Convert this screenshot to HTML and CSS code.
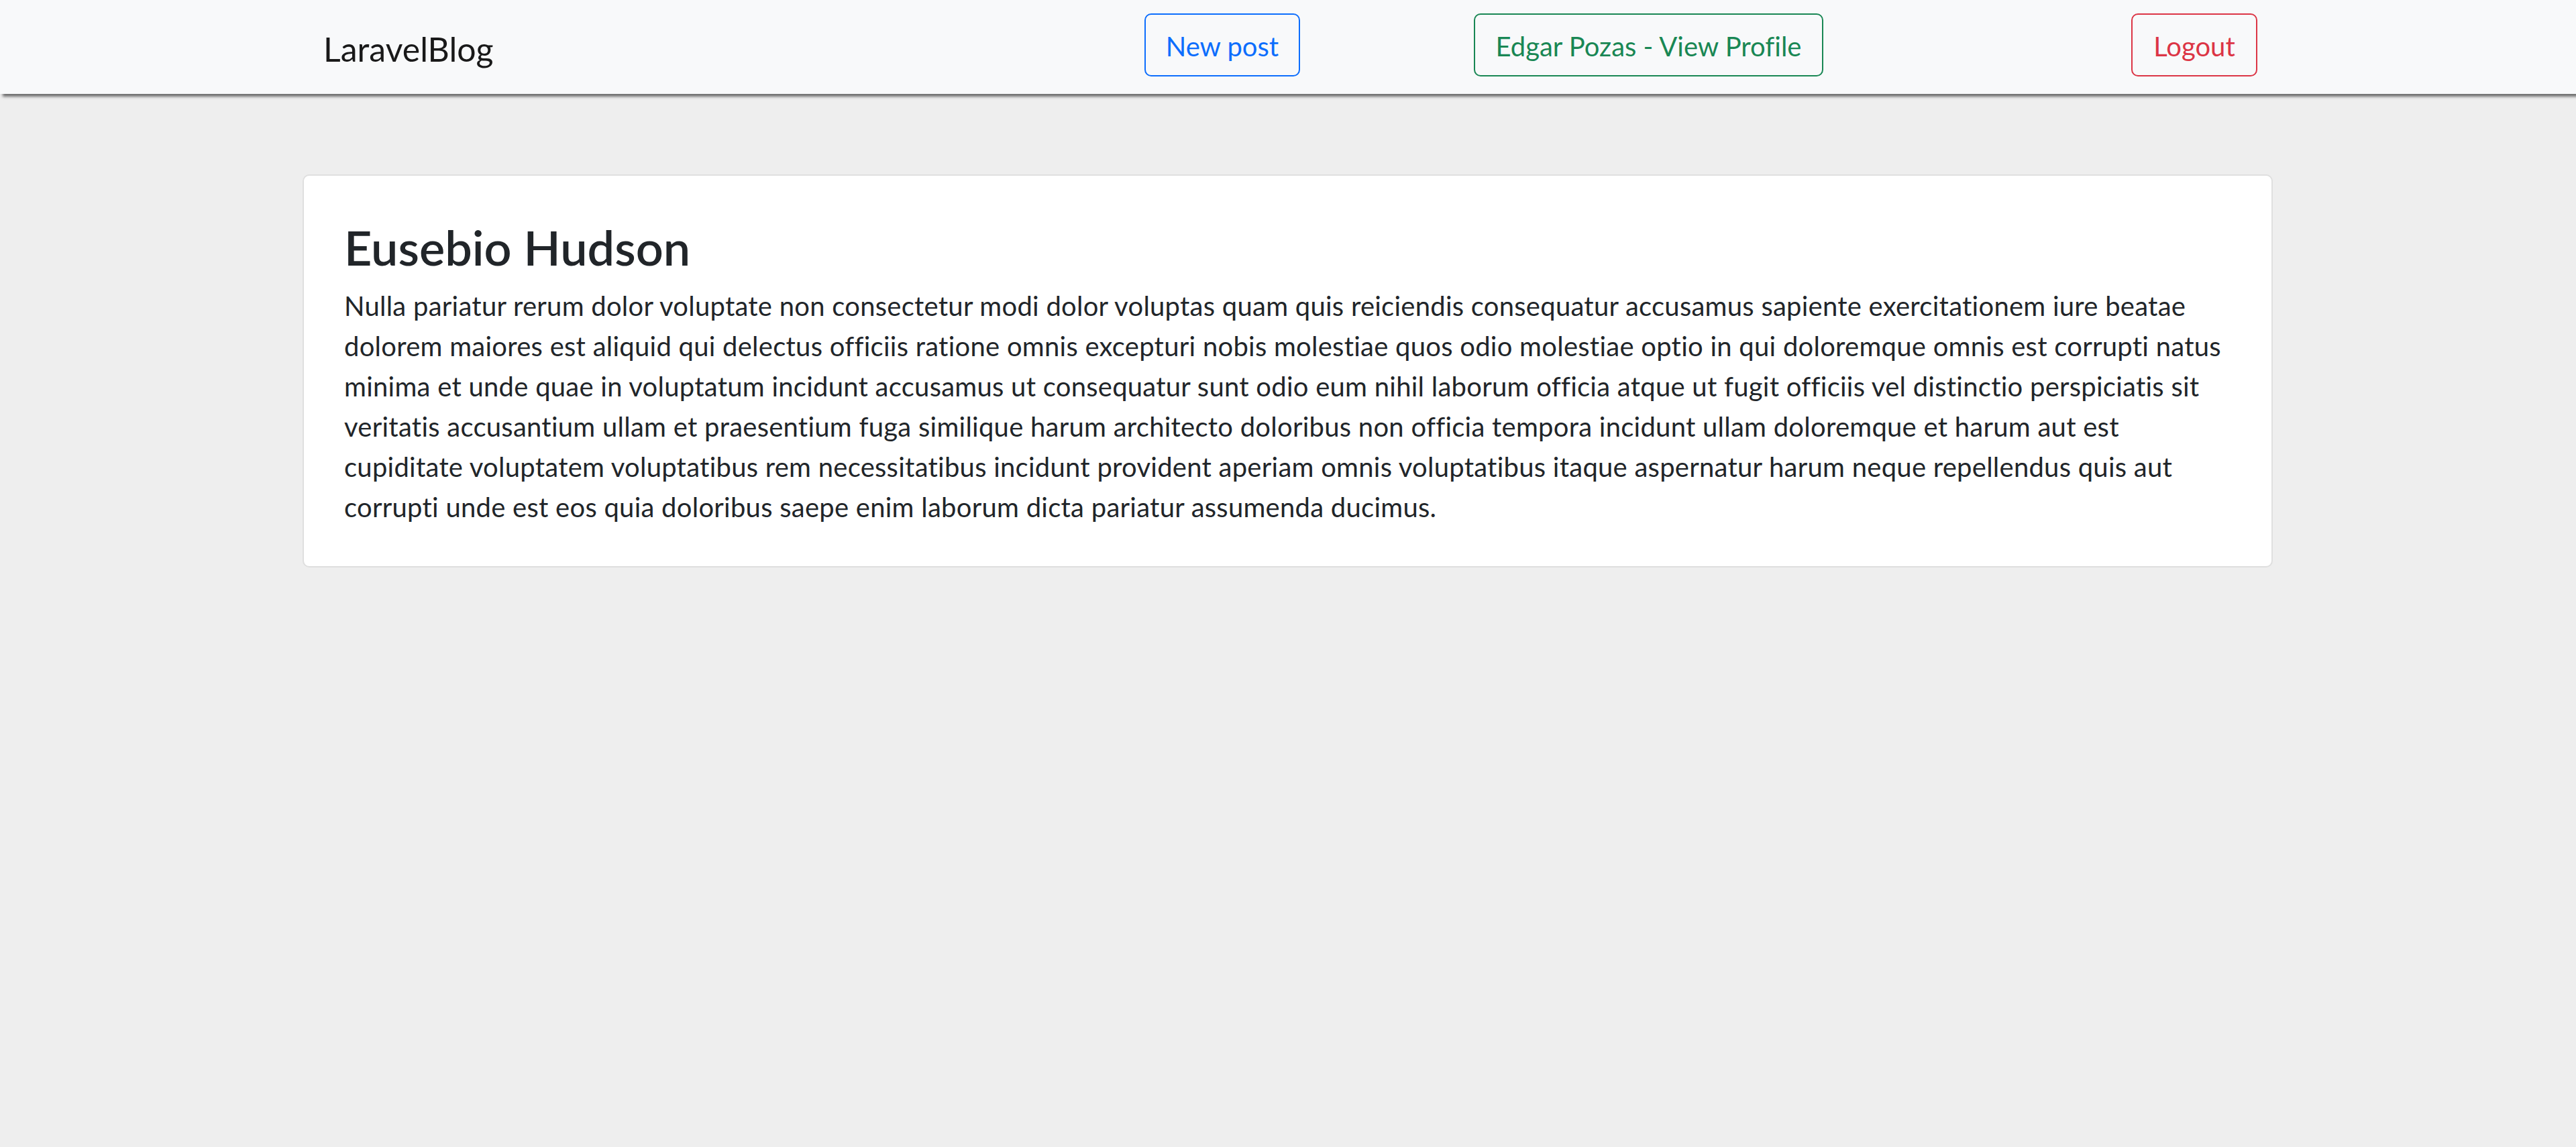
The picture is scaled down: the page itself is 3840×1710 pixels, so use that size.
FILE: index.html
```html
<!DOCTYPE html>
<html lang="en">
<head>
<meta charset="utf-8">
<title>LaravelBlog</title>
<link rel="stylesheet" href="styles.css">
</head>
<body>
<nav class="navbar">
  <div class="nav-inner">
    <a class="brand" href="#">LaravelBlog</a>
    <a class="btn btn-primary-outline btn-new" href="#">New post</a>
    <a class="btn btn-success-outline btn-profile" href="#">Edgar Pozas - View Profile</a>
    <a class="btn btn-danger-outline btn-logout" href="#">Logout</a>
  </div>
</nav>
<main class="main">
  <article class="card">
    <h2 class="card-title">Eusebio Hudson</h2>
    <p class="card-text">Nulla pariatur rerum dolor voluptate non consectetur modi dolor voluptas quam quis reiciendis consequatur accusamus sapiente exercitationem iure beatae dolorem maiores est aliquid qui delectus officiis ratione omnis excepturi nobis molestiae quos odio molestiae optio in qui doloremque omnis est corrupti natus minima et unde quae in voluptatum incidunt accusamus ut consequatur sunt odio eum nihil laborum officia atque ut fugit officiis vel distinctio perspiciatis sit veritatis accusantium ullam et praesentium fuga similique harum architecto doloribus non officia tempora incidunt ullam doloremque et harum aut est cupiditate voluptatem voluptatibus rem necessitatibus incidunt provident aperiam omnis voluptatibus itaque aspernatur harum neque repellendus quis aut corrupti unde est eos quia doloribus saepe enim laborum dicta pariatur assumenda ducimus.</p>
  </article>
</main>
</body>
</html>
```

FILE: styles.css
```css
* { box-sizing: border-box; }

html, body {
  margin: 0;
  padding: 0;
}

body {
  background: #eeeeee;
  font-family: Lato, "Liberation Sans", sans-serif;
  font-variant-ligatures: none;
  color: #212529;
  min-height: 1710px;
}

.navbar {
  height: 140px;
  background: #f8f9fa;
  box-shadow: 4px 4px 4px rgba(0, 0, 0, 0.55);
  position: relative;
  z-index: 1;
}

.nav-inner {
  display: flex;
  align-items: flex-start;
  padding-left: 482px;
  padding-top: 20px;
}

.brand {
  flex: 0 0 1224px;
  font-size: 50px;
  line-height: 94px;
  color: rgba(0, 0, 0, 0.9);
  text-decoration: none;
  padding-top: 6px;
}

.btn {
  display: flex;
  align-items: center;
  justify-content: center;
  height: 94px;
  padding-top: 4px;
  border: 2.5px solid currentColor;
  border-radius: 10px;
  font-size: 40px;
  text-decoration: none;
  background: transparent;
}

.btn-primary-outline { color: #0d6efd; }
.btn-success-outline { color: #198754; }
.btn-danger-outline { color: #dc3545; }

.btn-new { width: 232px; }
.btn-profile { width: 521px; margin-left: 259px; }
.btn-logout { width: 188px; margin-left: 459px; }

.main {
  padding: 120px 452px 0 451px;
}

.card {
  background: #ffffff;
  border: 2px solid #dfdfdf;
  border-radius: 10px;
  padding: 60px 60px 58px 60px;
}

.card-title {
  margin: 0 0 12px 0;
  font-size: 72px;
  line-height: 92px;
  font-weight: 600;
}

.card-text {
  margin: 0;
  font-size: 40px;
  line-height: 60px;
  letter-spacing: 0.25px;
}
```
